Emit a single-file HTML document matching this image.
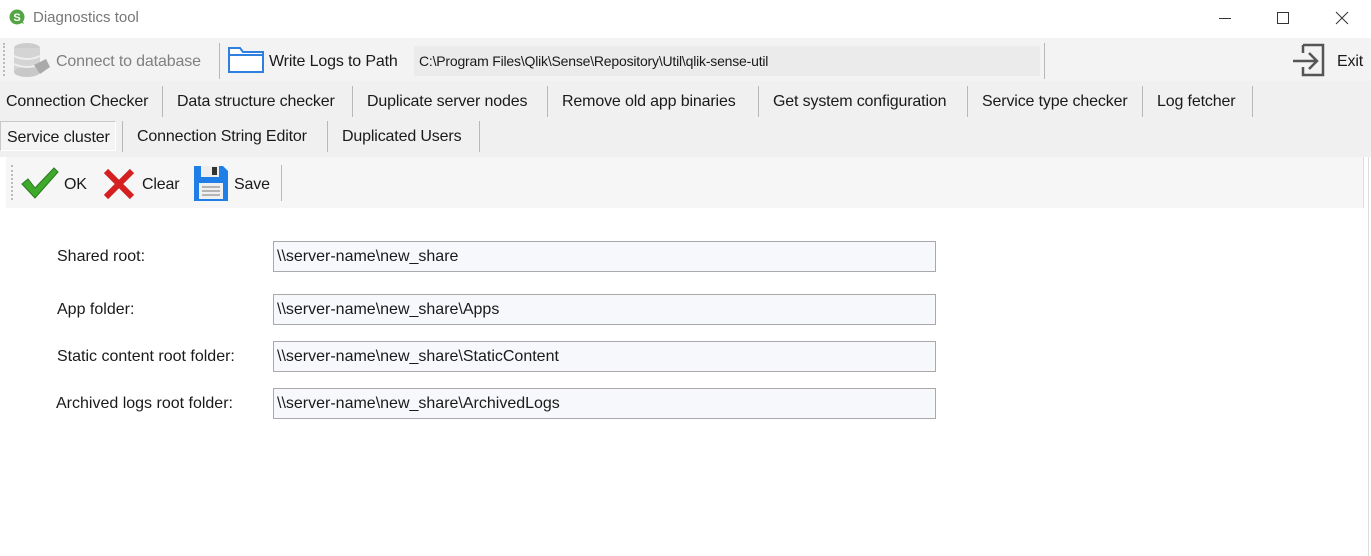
<!DOCTYPE html>
<html><head><style>
*{margin:0;padding:0;box-sizing:border-box}
body{width:1371px;height:556px;position:relative;background:#fff;font-family:"Liberation Sans",sans-serif;color:#1a1a1a;overflow:hidden}
.a{position:absolute;white-space:nowrap}
.t{font-size:16px;letter-spacing:-0.15px}
.sep{position:absolute;width:1px;background:#b8b8b8}
.inp{position:absolute;left:273px;width:663px;height:31px;border:1px solid #a9a9a9;background:#f6f8fb;font-size:16px;padding:6px 0 0 3px}
.lbl{position:absolute;font-size:16px}
</style></head><body>
<svg class="a" style="left:9px;top:9px" width="16" height="16" viewBox="0 0 16 16"><circle cx="8" cy="8" r="7.5" fill="#54a544"/><text x="8" y="12" font-size="11" font-weight="bold" fill="#fff" text-anchor="middle" font-family="Liberation Sans">S</text><path d="M11 13 L15 15 L13 11Z" fill="#54a544"/></svg>
<div class="a" style="left:33px;top:9px;font-size:15px;color:#777">Diagnostics tool</div>
<div class="a" style="left:1219px;top:18px;width:12px;height:1px;background:#333"></div>
<div class="a" style="left:1277px;top:12px;width:12px;height:12px;border:1px solid #333"></div>
<svg class="a" style="left:1335px;top:11px" width="14" height="14"><path d="M1 1L13 13M13 1L1 13" stroke="#333" stroke-width="1"/></svg>
<div class="a" style="left:0;top:38px;width:1371px;height:43px;background:#f3f3f3"></div>
<div class="a" style="left:3px;top:43px;width:2px;height:33px;border-left:2px dotted #bbb"></div>
<svg class="a" style="left:12px;top:41px" width="40" height="38"><ellipse cx="15" cy="7" rx="13" ry="5" fill="#ccc"/><rect x="2" y="7" width="26" height="24" fill="#d4d4d4"/><ellipse cx="15" cy="31" rx="13" ry="5" fill="#c8c8c8"/><path d="M2 15 Q15 21 28 15M2 23Q15 29 28 23" stroke="#eee" fill="none" stroke-width="2"/><path d="M22 24 L34 18 L38 26 L28 33Z" fill="#aaa"/></svg>
<div class="a t" style="left:56px;top:53px;color:#808080">Connect to database</div>
<div class="sep" style="left:219px;top:43px;height:36px"></div>
<svg class="a" style="left:228px;top:46px" width="37" height="28"><path d="M1 2H12L15 6H35V26H1Z" fill="#fff" stroke="#2f7fe0" stroke-width="2"/><path d="M1 9H35" stroke="#2f7fe0" stroke-width="2"/></svg>
<div class="a t" style="left:269px;top:53px">Write Logs to Path</div>
<div class="a" style="left:414px;top:46px;width:626px;height:30px;background:#ebebeb;font-size:14px;padding:7px 0 0 5px;letter-spacing:-0.2px">C:\Program Files\Qlik\Sense\Repository\Util\qlik-sense-util</div>
<div class="sep" style="left:1044px;top:43px;height:36px"></div>
<svg class="a" style="left:1293px;top:43px" width="38" height="35"><path d="M10 2H30V32H10V24M10 10V2" stroke="#555" stroke-width="2.5" fill="none"/><path d="M0 18H24M16 10L24 18L16 26" stroke="#555" stroke-width="2.5" fill="none"/></svg>
<div class="a t" style="left:1337px;top:53px">Exit</div>
<div class="a" style="left:0;top:81px;width:1371px;height:76px;background:#f0f0f0"></div>
<div class="a t" style="left:6px;top:93px">Connection Checker</div>
<div class="sep" style="left:162px;top:86px;height:31px"></div>
<div class="a t" style="left:177px;top:93px">Data structure checker</div>
<div class="sep" style="left:352px;top:86px;height:31px"></div>
<div class="a t" style="left:367px;top:93px">Duplicate server nodes</div>
<div class="sep" style="left:547px;top:86px;height:31px"></div>
<div class="a t" style="left:562px;top:93px">Remove old app binaries</div>
<div class="sep" style="left:758px;top:86px;height:31px"></div>
<div class="a t" style="left:773px;top:93px">Get system configuration</div>
<div class="sep" style="left:967px;top:86px;height:31px"></div>
<div class="a t" style="left:982px;top:93px">Service type checker</div>
<div class="sep" style="left:1142px;top:86px;height:31px"></div>
<div class="a t" style="left:1157px;top:93px">Log fetcher</div>
<div class="sep" style="left:1252px;top:86px;height:31px"></div>
<div class="a" style="left:0;top:121px;width:116px;height:30px;border:1px solid #c8c8c8;border-right-color:#fff;border-bottom-color:#fff;background:#f4f4f4"></div>
<div class="a t" style="left:7px;top:129px">Service cluster</div>
<div class="sep" style="left:122px;top:121px;height:31px"></div>
<div class="a t" style="left:137px;top:128px">Connection String Editor</div>
<div class="sep" style="left:327px;top:121px;height:31px"></div>
<div class="a t" style="left:342px;top:128px">Duplicated Users</div>
<div class="sep" style="left:479px;top:121px;height:31px"></div>
<div class="a" style="left:6px;top:157px;width:1358px;height:51px;background:#f6f6f6;border-right:1px solid #ddd"></div>
<div class="a" style="left:11px;top:165px;height:35px;border-left:2px dotted #bbb"></div>
<svg class="a" style="left:20px;top:166px" width="40" height="34"><path d="M2 18L8 13L15 22L34 2L38 6L15 32Z" fill="#3daa2c" stroke="#2a7a1e" stroke-width="1"/></svg>
<div class="a t" style="left:64px;top:176px">OK</div>
<svg class="a" style="left:103px;top:168px" width="32" height="32"><path d="M3 3L29 29M29 3L3 29" stroke="#d42020" stroke-width="6"/></svg>
<div class="a t" style="left:142px;top:176px">Clear</div>
<svg class="a" style="left:193px;top:165px" width="36" height="37"><path d="M1 1H30L35 6V36H1Z" fill="#1f7fe6"/><rect x="8" y="1" width="18" height="11" fill="#eee"/><rect x="19" y="2" width="5" height="8" fill="#333"/><rect x="6" y="18" width="24" height="16" fill="#f0f0f0"/><path d="M9 22H27M9 26H27M9 30H27" stroke="#777"/></svg>
<div class="a t" style="left:234px;top:176px">Save</div>
<div class="sep" style="left:281px;top:165px;height:36px"></div>
<div class="a" style="left:1368px;top:157px;width:1px;height:399px;background:#ddd"></div>
<div class="lbl" style="left:57px;top:248px">Shared root:</div>
<div class="inp" style="top:241px">\\server-name\new_share</div>
<div class="lbl" style="left:57px;top:301px">App folder:</div>
<div class="inp" style="top:294px">\\server-name\new_share\Apps</div>
<div class="lbl" style="left:57px;top:348px">Static content root folder:</div>
<div class="inp" style="top:341px">\\server-name\new_share\StaticContent</div>
<div class="lbl" style="left:56px;top:395px">Archived logs root folder:</div>
<div class="inp" style="top:388px">\\server-name\new_share\ArchivedLogs</div>
</body></html>
